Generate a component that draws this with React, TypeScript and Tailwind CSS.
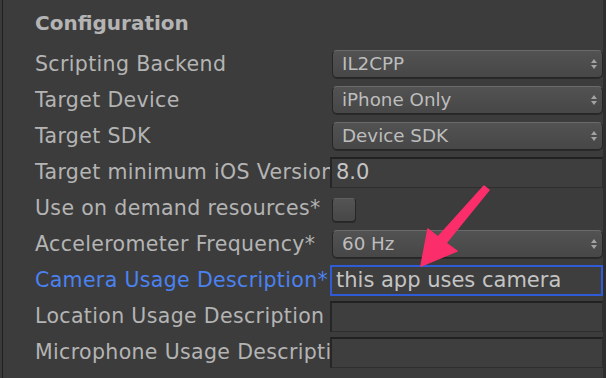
const font = { fontFamily: '"DejaVu Sans", Verdana, sans-serif' };

type Row =
  | { label: string; kind: 'select'; value: string }
  | { label: string; kind: 'text'; value: string; focus?: boolean }
  | { label: string; kind: 'check' };

const rows: Row[] = [
  { label: 'Scripting Backend', kind: 'select', value: 'IL2CPP' },
  { label: 'Target Device', kind: 'select', value: 'iPhone Only' },
  { label: 'Target SDK', kind: 'select', value: 'Device SDK' },
  { label: 'Target minimum iOS Version', kind: 'text', value: '8.0' },
  { label: 'Use on demand resources*', kind: 'check' },
  { label: 'Accelerometer Frequency*', kind: 'select', value: '60 Hz' },
  { label: 'Camera Usage Description*', kind: 'text', value: 'this app uses camera', focus: true },
  { label: 'Location Usage Description', kind: 'text', value: '' },
  { label: 'Microphone Usage Description', kind: 'text', value: '' },
];

function Select({ value }: { value: string }) {
  return (
    <div className="ml-[2px] h-[28px] flex-1 flex items-center rounded-[5px] border border-[#262626] border-t-[#6a6a6a] bg-gradient-to-b from-[#525252] to-[#474747] shadow-[0_1px_0_#2a2a2a] pl-[9px] pr-[4px]">
      <span className="flex-1 text-[18.3px] text-[#bdbdbd]" style={font}>{value}</span>
      <svg width="6" height="12" viewBox="0 0 6 12" className="mr-[1px]">
        <path d="M3 1 L6 5 L0 5 Z" fill="#a3a3a3" />
        <path d="M3 11 L6 7 L0 7 Z" fill="#a3a3a3" />
      </svg>
    </div>
  );
}

function TextField({ value, focus }: { value: string; focus?: boolean }) {
  return (
    <div
      className={
        focus
          ? 'h-[31px] flex-1 flex items-center border-2 border-[#2f5bd6] bg-[#3e3e3e] pl-[4px]'
          : 'h-[31px] flex-1 flex items-center border border-[#2e2e2e] border-t-2 border-t-[#212121] border-l-2 border-l-[#262626] bg-[#3e3e3e] pl-[4px]'
      }
    >
      <span className="text-[21px] text-[#c4c4c4] leading-none" style={font}>{value}</span>
    </div>
  );
}

function Check() {
  return (
    <div className="ml-[2px] mt-[4px] w-[24px] h-[24px] rounded-[4px] border border-[#262626] border-t-[#5e5e5e] bg-gradient-to-b from-[#545454] to-[#474747] shadow-[0_1px_0_#2a2a2a]" />
  );
}

export default function App() {
  return (
    <div className="relative w-[606px] h-[378px] overflow-hidden bg-[#3c3c3c] flex">
      <div className="w-[2px] bg-[#3a3a3a]" />
      <div className="w-[1px] bg-[#202020]" />
      <div className="flex-1 flex flex-col">
        <div className="h-[46px] flex items-center pl-[32px] pb-[1px]">
          <span className="text-[20px] font-bold text-[#b4b4b4]" style={font}>Configuration</span>
        </div>
        {rows.map((r) => (
          <div key={r.label} className="h-[36px] flex items-center">
            <div
              className={
                'w-[327px] shrink-0 pl-[32px] overflow-hidden whitespace-nowrap text-[20.5px] tracking-[0.35px] ' +
                (r.kind === 'text' && r.focus ? 'text-[#4b82f2]' : 'text-[#b4b4b4]')
              }
              style={font}
            >
              {r.label}
            </div>
            <div className="flex-1 flex items-center">
              {r.kind === 'select' && <Select value={r.value} />}
              {r.kind === 'text' && <TextField value={r.value} focus={r.focus} />}
              {r.kind === 'check' && <Check />}
            </div>
          </div>
        ))}
      </div>
      <div className="w-[3px] bg-[#2e2e2e]" />
      <svg className="absolute left-0 top-0" width="606" height="378" viewBox="0 0 606 378">
        <polygon
          points="484,186 489,190 446,243 457,251 421,266 428,229 438,237"
          fill="#fb2d6b"
          stroke="#fb2d6b"
          strokeWidth="1.5"
          strokeLinejoin="round"
        />
      </svg>
    </div>
  );
}
